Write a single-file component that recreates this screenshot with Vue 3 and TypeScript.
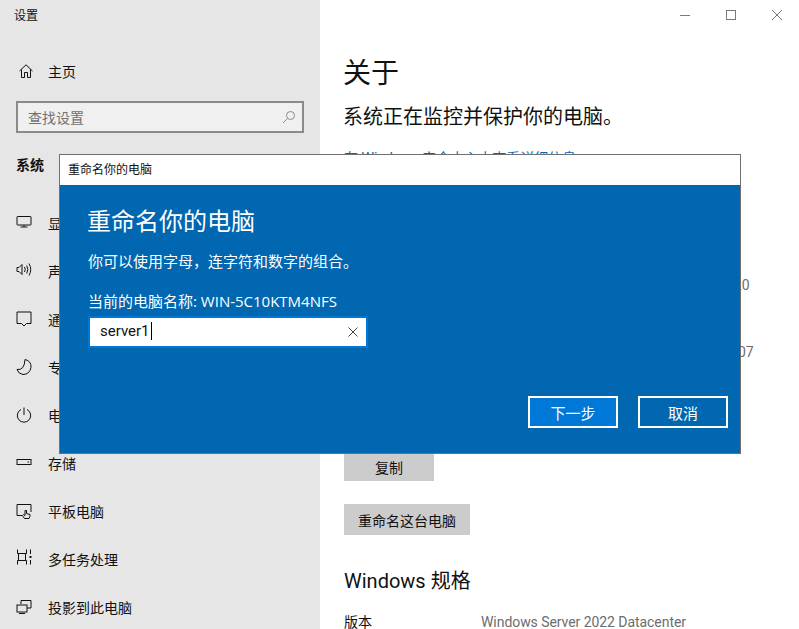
<template>
  <div class="settings">
    <aside class="sidebar">
      <div class="app-title">设置</div>
      <div class="home-row">
        <svg class="nav-icon" viewBox="0 0 16 16"><path d="M1.5 8 8 1.8 14.500 8M3.500 6.500V14.500H6.500V9.500H9.500V14.500H12.500V6.500" /></svg>
        <span>主页</span>
      </div>
      <div class="search">
        <span>查找设置</span>
        <svg class="search-icon" viewBox="0 0 14 14"><circle cx="8.500" cy="5.500" r="4" /><path d="M5.500 8.500 1 13" /></svg>
      </div>
      <div class="group-title">系统</div>
      <ul class="nav">
        <li v-for="item in navItems" :key="item.label">
          <svg class="nav-icon" viewBox="0 0 16 16" v-html="item.icon"></svg>
          <span>{{ item.label }}</span>
        </li>
      </ul>
    </aside>

    <main class="content">
      <div class="window-controls">
        <svg viewBox="0 0 12 12"><path d="M1 6.500H11" /></svg>
        <svg viewBox="0 0 12 12"><rect x="1.500" y="1.500" width="9" height="9" /></svg>
        <svg viewBox="0 0 12 12"><path d="M1 1 11 11M11 1 1 11" /></svg>
      </div>
      <h1>关于</h1>
      <p class="status">系统正在监控并保护你的电脑。</p>
      <a class="link">在 Windows 安全中心中查看详细信息</a>
      <div class="spec-values">
        <span class="cut-a">20</span>
        <span class="cut-b">07</span>
      </div>
      <button class="gray-btn copy">复制</button>
      <button class="gray-btn rename">重命名这台电脑</button>
      <h2>Windows 规格</h2>
      <div class="spec-row">
        <span class="spec-key">版本</span>
        <span class="spec-val">Windows Server 2022 Datacenter</span>
      </div>
    </main>

    <section class="dialog">
      <div class="dialog-title">重命名你的电脑</div>
      <div class="dialog-body">
        <h3>重命名你的电脑</h3>
        <p class="hint">你可以使用字母，连字符和数字的组合。</p>
        <p class="current">当前的电脑名称: {{ currentName }}</p>
        <div class="name-input">
          <span class="typed">{{ newName }}</span><span class="caret"></span>
          <svg class="clear" viewBox="0 0 10 10"><path d="M.5 .5 9.500 9.500M9.500 .5 .5 9.500" /></svg>
        </div>
        <div class="actions">
          <button class="next">下一步</button>
          <button class="cancel">取消</button>
        </div>
      </div>
    </section>
  </div>
</template>

<script setup lang="ts">
import { ref } from 'vue';

interface NavItem {
  label: string;
  icon: string;
}

const currentName = 'WIN-5C10KTM4NFS';
const newName = ref('server1');

const navItems: NavItem[] = [
  { label: '显示', icon: '<rect x="1" y="1.500" width="14" height="8.500" rx="0.500"/><path d="M8 10V12M4.500 12H11.500"/>' },
  { label: '声音', icon: '<path d="M1 4.500H3L6 1.500V11.500L3 8.500H1Z"/><path d="M8.500 4Q10 6.500 8.500 9M10.700 2.500Q13 6.500 10.700 10.500M13 .5Q16.500 6.500 13 12.500"/>' },
  { label: '通知和操作', icon: '<path d="M1 1H15V12.500H10.500L8 15 5.500 12.500H1Z"/>' },
  { label: '专注助手', icon: '<path d="M9 .5Q15.500 2 15 8.500 13.500 15.500 7 15.500 2.500 15 1 10.500 8.500 11.500 9 .5Z"/>' },
  { label: '电源和睡眠', icon: '<path d="M8 .5V8M5 2.500A6.700 6.700 0 1 0 11 2.500"/>' },
  { label: '存储', icon: '<rect x="1" y="4.500" width="14" height="5" /><path d="M11.500 7H13"/>' },
  { label: '平板电脑', icon: '<path d="M6 12.500H1V1.500H15V9"/><path d="M8.500 15.500 6.500 12.500 7.500 11.500 9 12.500V7.500H10.500V10.500L14 11.500V13.500L13 15.500Z"/>' },
  { label: '多任务处理', icon: '<path d="M1.500 -1.500V2.500H10.500V-1.500M1.500 13.500V9.500H10.500V13.500M2.500 3V9M9.500 3V9M14.500 -1.500V3M14.500 9V13.500"/><rect x="13.500" y="5" width="2" height="2" fill="currentColor" stroke="none"/>' },
  { label: '投影到此电脑', icon: '<path d="M5 5V1.500H15V9H11"/><rect x="1" y="6" width="10" height="7" /><path d="M3 14.500H9"/>' },
];
</script>

<style>
html,
body {
  margin: 0;
  overflow: hidden;
}
</style>

<style scoped>
.settings {
  position: relative;
  display: flex;
  width: 799px;
  height: 629px;
  overflow: hidden;
  font-family: Roboto, "Noto Sans CJK SC", sans-serif;
  color: #111;
  background: #fff;
}
svg {
  fill: none;
  stroke: currentColor;
  stroke-width: 1;
}
.sidebar {
  flex: none;
  width: 320px;
  box-sizing: border-box;
  padding: 8px 16px 0;
  background: #e6e6e6;
}
.app-title {
  height: 16px;
  margin-left: -2px;
  font-size: 12px;
  line-height: 16px;
}
.home-row {
  display: flex;
  align-items: center;
  gap: 14px;
  height: 24px;
  margin-top: 35px;
  margin-left: 2px;
  font-size: 14px;
}
.nav-icon {
  flex: none;
  width: 16px;
  height: 16px;
  overflow: visible;
}
.search {
  display: flex;
  align-items: center;
  justify-content: space-between;
  box-sizing: border-box;
  width: 288px;
  height: 32px;
  margin-top: 18px;
  padding: 0 6px 0 10px;
  border: 2px solid #8a8a8a;
  background: #f0f0f0;
  font-size: 14px;
  color: #717171;
}
.search-icon {
  width: 14px;
  height: 14px;
  color: #8a8a8a;
}
.group-title {
  margin-top: 22px;
  font-size: 14px;
  line-height: 20px;
  font-weight: 700;
}
.nav {
  list-style: none;
  margin: 24px 0 0;
  padding: 0;
}
.nav li {
  display: flex;
  align-items: center;
  gap: 16px;
  height: 48px;
  font-size: 14px;
  white-space: nowrap;
}
.content {
  position: relative;
  flex: 1;
  padding-left: 24px;
}
.window-controls {
  position: absolute;
  top: 9px;
  right: 16px;
  display: flex;
  gap: 34px;
  color: #7a7a7a;
}
.window-controls svg {
  width: 12px;
  height: 12px;
}
h1 {
  margin: 53px 0 0 -1px;
  font-size: 28px;
  font-weight: 400;
  line-height: 42px;
}
.status {
  margin: 8px 0 0 -1px;
  font-size: 20px;
  line-height: 28px;
}
.link {
  display: block;
  margin-top: 17px;
  font-size: 14px;
  line-height: 20px;
  color: #0067c0;
}
.spec-values {
  position: relative;
  height: 298px;
  font-size: 14px;
  line-height: 20px;
  color: #6d6d6d;
}
.cut-a {
  position: absolute;
  top: 107px;
  left: 390px;
}
.cut-b {
  position: absolute;
  top: 174px;
  left: 394px;
}
.gray-btn {
  display: block;
  height: 31px;
  padding: 2px 0 0;
  border: 0;
  background: #ccc;
  font-family: inherit;
  font-size: 14px;
  color: #111;
}
.copy {
  width: 90px;
  margin-top: -16px;
}
.rename {
  width: 126px;
  margin-top: 23px;
  padding-top: 0;
}
h2 {
  margin: 31px 0 0;
  font-size: 20px;
  font-weight: 400;
  line-height: 30px;
}
.spec-row {
  display: flex;
  margin-top: 16px;
  font-size: 14px;
  line-height: 20px;
}
.spec-key {
  width: 137px;
}
.spec-val {
  color: #6d6d6d;
  white-space: nowrap;
  letter-spacing: -0.06px;
}
.dialog {
  position: absolute;
  top: 154px;
  left: 59px;
  display: flex;
  flex-direction: column;
  box-sizing: border-box;
  width: 682px;
  height: 300px;
  border: 1px solid #707070;
}
.dialog-title {
  height: 30px;
  padding-left: 8px;
  background: #fff;
  font-size: 12px;
  line-height: 30px;
}
.dialog-body {
  flex: 1;
  padding: 0 12px 0 28px;
  background: #0067b0;
  color: #fff;
}
h3 {
  margin: 21px 0 0 -1px;
  font-size: 24px;
  font-weight: 400;
  line-height: 33px;
}
.hint {
  margin: 13px 0 0;
  font-size: 15px;
  line-height: 20px;
}
.current {
  margin: 19px 0 0;
  font-family: "Open Sans", "Noto Sans CJK SC", sans-serif;
  font-size: 15px;
  line-height: 20px;
}
.name-input {
  display: flex;
  align-items: center;
  box-sizing: border-box;
  width: 280px;
  height: 32px;
  margin-top: 5px;
  padding: 0 8px 2px 10px;
  border: 2px solid #0078d7;
  background: #fff;
  font-size: 15px;
  color: #111;
}
.caret {
  width: 1px;
  height: 18px;
  margin-left: 1px;
  background: #000;
}
.clear {
  width: 10px;
  height: 10px;
  margin-left: auto;
  margin-top: 2px;
  color: #444;
}
.actions {
  display: flex;
  justify-content: flex-end;
  gap: 20px;
  margin-top: 48px;
}
.actions button {
  box-sizing: border-box;
  width: 90px;
  height: 32px;
  padding: 0;
  border: 2px solid #fff;
  font-family: inherit;
  font-size: 15px;
  color: #fff;
}
.next {
  background: #0078d7;
}
.cancel {
  background: #0067b0;
}
</style>
